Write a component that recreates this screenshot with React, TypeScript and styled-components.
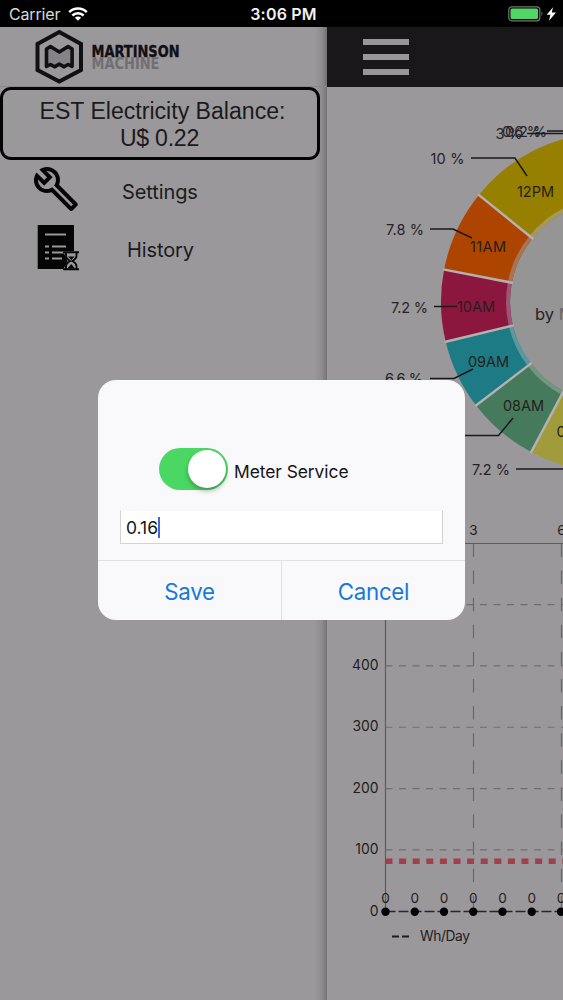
import React from "react";
import styled, { createGlobalStyle } from "styled-components";
import { MdOutlineBuild } from "react-icons/md";

const SURFACE = "#9a989b";

const GlobalStyle = createGlobalStyle`
  * { box-sizing: border-box; }
  body { margin: 0; background: ${SURFACE}; font-family: Inter, "Liberation Sans", sans-serif; color: #1b1a1d; }
`;

const Screen = styled.div`
  position: relative;
  display: flex;
  flex-direction: column;
  width: 563px;
  height: 1000px;
  overflow: hidden;
  background: ${SURFACE};
`;

const StatusBar = styled.header`
  display: grid;
  grid-template-columns: 1fr auto 1fr;
  align-items: center;
  flex: none;
  height: 27px;
  padding: 1px 5px 0 9px;
  background: #000;
  color: #d9d9da;
  font-size: 16px;
`;

const Carrier = styled.div`
  display: flex;
  align-items: center;
  gap: 8px;
  letter-spacing: -0.15px;
`;

const Clock = styled.div`
  color: #f2f2f2;
  font-weight: 600;
  font-size: 16px;
  letter-spacing: 0.2px;
`;

const Battery = styled.div`
  display: flex;
  justify-content: flex-end;
`;

const Body = styled.div`
  display: flex;
  flex: 1;
  min-height: 0;
`;

const Drawer = styled.nav`
  display: flex;
  flex-direction: column;
  flex: none;
  width: 327px;
  background: linear-gradient(to right, ${SURFACE} 315px, #8d8b8e 322px, #737174 327px);
`;

const Brand = styled.div`
  height: 60px;
  padding: 2px 0 0 35px;
  border-bottom: 1px solid #89878a;
`;

const Balance = styled.div`
  width: 320px;
  height: 73px;
  padding: 8px 0 0 5px;
  border: 3px solid #050506;
  border-radius: 11px;
  font: 23.1px/27px "Liberation Sans", sans-serif;
  text-align: center;
`;

const BalanceValue = styled.div`
  padding-right: 6px;
  letter-spacing: -0.25px;
`;

const MenuItem = styled.a<{ $inset: number; $gap: number; $lift: number }>`
  display: flex;
  align-items: center;
  gap: ${(p) => p.$gap}px;
  height: 58px;
  padding-left: ${(p) => p.$inset}px;
  font-size: 20px;
  letter-spacing: -0.1px;

  svg { margin-bottom: ${(p) => p.$lift}px; }
`;

const MenuList = styled.div`
  padding-top: 3px;
`;

const Page = styled.main`
  display: flex;
  flex-direction: column;
  flex: 1;
  min-width: 0;
`;

const TopBar = styled.div`
  display: flex;
  flex: none;
  height: 60px;
  padding: 12px 0 0 36px;
  background: #19171a;
`;

const MenuButton = styled.div`
  display: flex;
  flex-direction: column;
  gap: 9px;
`;

const MenuLine = styled.span`
  width: 46px;
  height: 6px;
  background: #98969a;
`;

const Chart = styled.svg`
  display: block;
  flex: none;
  overflow: hidden;
  font-family: Inter, "Liberation Sans", sans-serif;
`;

const Dialog = styled.section`
  position: absolute;
  left: 98px;
  top: 380px;
  display: flex;
  flex-direction: column;
  width: 367px;
  height: 240px;
  border-radius: 18px;
  background: #f9f8fb;
  overflow: hidden;
`;

const DialogBody = styled.div`
  display: flex;
  flex-direction: column;
  flex: 1;
  padding: 68px 21px 0 22px;
`;

const ToggleRow = styled.label`
  display: flex;
  align-items: center;
  gap: 6px;
  padding-left: 39px;
  font-size: 17.4px;
  letter-spacing: -0.05px;
  color: #151517;
`;

const ToggleText = styled.span`
  padding-top: 5px;
`;

const Toggle = styled.span`
  display: flex;
  justify-content: flex-end;
  width: 69px;
  height: 42px;
  padding: 2px;
  border-radius: 21px;
  background: #4bd763;
`;

const Knob = styled.span`
  width: 38px;
  height: 38px;
  border-radius: 50%;
  background: #fff;
  box-shadow: 0 3px 5px rgba(0, 0, 0, 0.28);
`;

const Field = styled.div`
  display: flex;
  align-items: center;
  width: 323px;
  height: 34px;
  margin-top: 20px;
  padding-left: 5px;
  border: 1px solid #d3d2d5;
  border-top-color: #f7f7f8;
  background: #fff;
  font-size: 17.5px;
  color: #151517;
`;

const Caret = styled.span`
  width: 2px;
  height: 21px;
  background: #4367d8;
`;

const Actions = styled.div`
  display: flex;
  flex: none;
  height: 60px;
  border-top: 1px solid #e2e1e4;
`;

const Action = styled.button`
  flex: 1;
  padding: 1px 0 0;
  border: 0;
  background: none;
  color: #1779dc;
  font: 22.3px Inter, sans-serif;
  letter-spacing: -0.3px;

  & + & { border-left: 1px solid #e2e1e4; }
`;

const Wifi = () => (
  <svg width="20" height="14" viewBox="0 0 20 14" fill="none" stroke="#fff" strokeWidth="2.5">
    <path d="M1.2 5.2a12.4 12.4 0 0 1 17.6 0" />
    <path d="M4.4 8.5a7.9 7.9 0 0 1 11.2 0" />
    <path d="M10 13.8 6.9 10.7a4.4 4.4 0 0 1 6.2 0Z" fill="#fff" stroke="none" />
  </svg>
);

const BatteryIcon = () => (
  <svg width="50" height="16" viewBox="0 0 50 16">
    <rect x=".8" y=".8" width="31" height="14" rx="3" fill="none" stroke="#777" strokeWidth="1.2" />
    <rect x="2.5" y="2.5" width="27.5" height="10.5" rx="1.5" fill="#4fd765" />
    <path d="M33.5 5.2q2 2.5 0 5" fill="#777" />
    <path d="M45 1.2 38.7 8.7h3.7L41 14.8l7-8.200h-4.200Z" fill="#fff" />
  </svg>
);

const Logo = () => (
  <svg width="150" height="56" viewBox="0 0 150 56">
    <path d="M24.300 3 46 15v26L24.300 52.500 2.500 41V15Z" fill="none" stroke="#111013" strokeWidth="4" />
    <path
      d="M11.500 37.500V20l4-2.500 8.800 5.500 8.800-5.500 4 2.500v17.500l-4-2-4 2.300-4.800-2.600-4.800 2.600-4-2.300Z"
      fill="#858387" stroke="#111013" strokeWidth="3.600" strokeLinejoin="round"
    />
    <g fontFamily="DejaVu Sans" fontWeight="700" fontSize="15.500">
      <text x="56.500" y="27.500" textLength="88" lengthAdjust="spacingAndGlyphs" fill="#111013" stroke="#111013" strokeWidth=".4">MARTINSON</text>
      <text x="56.500" y="40" textLength="68" lengthAdjust="spacingAndGlyphs" fill="#716f73">MACHINE</text>
    </g>
  </svg>
);

const HistoryIcon = () => (
  <svg width="46" height="46" viewBox="0 0 46 46">
    <rect x="4.700" y="0" width="36.300" height="44" fill="#050506" />
    <path d="M12 9.500h21M12 21.500h4M19 21.500h14M12 27.500h4M19 27.500h12M12 33.500h4M19 33.500h10" stroke={SURFACE} strokeWidth="1.900" />
    <path d="M30 26h16v19H30l4.500-9Z" fill={SURFACE} />
    <path d="M30 27.300h16M30 44.300h16" stroke="#050506" strokeWidth="2" />
    <path d="M33 28v3q0 2.500 4 5-4 2.500-4 5V44M43.500 28v3q0 2.500-4 5 4 2.500 4 5V44" fill="none" stroke="#050506" strokeWidth="1.800" />
    <path d="M35 31.500h6.500l-3.250 3.500ZM34.500 43.500l3.750-4.500 3.750 4.500Z" fill="#050506" />
  </svg>
);

const CX = 284;
const CY = 215;

const point = (r: number, deg: number) => {
  const a = (deg * Math.PI) / 180;
  return `${CX - r * Math.cos(a)} ${CY - r * Math.sin(a)}`;
};

const ring = (r0: number, r1: number, from: number, to: number) =>
  `M${point(r1, from)}A${r1} ${r1} 0 0 0 ${point(r1, to)}L${point(r0, to)}A${r0} ${r0} 0 0 1 ${point(r0, from)}Z`;

const slices = [
  { from: 75, to: 39, color: "#978000", rim: "#a6975c" },
  { from: 39, to: 11, color: "#ad4500", rim: "#aa7354" },
  { from: 11, to: -13.5, color: "#8c173e", rim: "#9a5672" },
  { from: -13.5, to: -37.5, color: "#1c7b84", rim: "#5c979c" },
  { from: -37.5, to: -62, color: "#457a5c", rim: "#769482" },
  { from: -62, to: -87, color: "#a19b3b", rim: "#a6a36c" },
];

const sliceLabels = [
  { x: 190, y: 110, text: "12PM", w: 37 },
  { x: 143, y: 165, text: "11AM", w: 36 },
  { x: 130, y: 225, text: "10AM", w: 38 },
  { x: 141, y: 280, text: "09AM", w: 41 },
  { x: 176, y: 323.5, text: "08AM", w: 41 },
];

const callouts = [
  { x: 103.5, y: 76.5, text: "10 %", w: 34, line: "M144 71H188L200 89" },
  { x: 59, y: 147.5, text: "7.8 %", w: 38, line: "M103 142H126L145 151" },
  { x: 64, y: 225.5, text: "7.2 %", w: 37, line: "M107 219.5H130" },
  { x: 58, y: 297, text: "6.6 %", w: 38, line: "M103 291.5H127L146 282" },
  { x: 145, y: 387.5, text: "7.2 %", w: 38, line: "M189 382H236" },
];

const Donut = () => (
  <Chart width="236" height="413" viewBox="0 0 236 413" fill="#252327" fontSize="14.5">
    <circle cx={CX} cy={CY} r="104" fill="#959596" />
    {slices.map((s) => (
      <g key={s.from}>
        <path d={ring(101, 170, s.from, s.to)} fill={s.color} />
        <path d={ring(101, 105, s.from, s.to)} fill={s.rim} />
      </g>
    ))}
    {slices.map((s) => (
      <path key={s.to} d={`M${point(100, s.to)}L${point(171, s.to)}`} stroke="#b5b1b0" strokeWidth="2.5" />
    ))}
    <g fill="#251f1b">
      {sliceLabels.map((l) => (
        <text key={l.text} x={l.x} y={l.y} textLength={l.w}>{l.text}</text>
      ))}
      <text x="229.5" y="350">07AM</text>
    </g>
    {callouts.map((c) => (
      <g key={c.y}>
        <text x={c.x} y={c.y} textLength={c.w}>{c.text}</text>
        <path d={c.line} fill="none" stroke="#1b191d" strokeWidth="1.5" />
      </g>
    ))}
    <path d="M138 348.5H171.5L186 331" fill="none" stroke="#1b191d" strokeWidth="1.5" />
    <text x="168.5" y="51.500" textLength="27">3 %</text>
    <text x="175" y="49.500" textLength="39">0.6 %</text>
    <text x="178" y="49.500" textLength="42">0.2 %</text>
    <path d="M200 46.500h20M220 44h16M220 46.500h16" stroke="#1b191d" strokeWidth="1.300" />
    <text x="208" y="232.500" fontSize="16.500">by <tspan fill="#66656a">M</tspan></text>
  </Chart>
);

const Usage = () => {
  const days = [0, 1, 2, 3, 4, 5, 6];
  const rows = [0, 100, 200, 300, 400, 500];
  return (
    <Chart width="236" height="500" viewBox="0 0 236 500" fill="#1f1d21" fontSize="13.900">
      <path d="M58.500 43.500H236M58.500 43.500V411" fill="none" stroke="#5c5a5d" strokeWidth="1.200" />
      {rows.slice(1).map((v) => (
        <path key={v} d={`M58.500 ${411.300 - v * 0.6135}H236`} stroke="#706e71" strokeWidth="1.200" strokeDasharray="7 6.500" />
      ))}
      <path d="M146.500 43.500V411M234.500 43.500V411" stroke="#69676a" strokeWidth="1.200" strokeDasharray="13.500 13.600" />
      <path d="M58.500 361.200H236" stroke="#a13f4a" strokeWidth="5.500" strokeDasharray="7 6.600" />
      <path d="M58.500 411.500H236" stroke="#29272b" strokeWidth="1.300" strokeDasharray="10 3" />
      {rows.map((v) => (
        <text key={v} x="51.500" y={415.500 - v * 0.6135} textAnchor="end">{v}</text>
      ))}
      {days.map((d) => (
        <g key={d}>
          <circle cx={58.500 + d * 29.250} cy="411.800" r="4.200" fill="#020204" />
          <text x={58.500 + d * 29.250} y="402.500" textAnchor="middle" fontSize="13.500">0</text>
        </g>
      ))}
      <text x="146.500" y="35" textAnchor="middle" fontSize="13.500">3</text>
      <text x="234.500" y="35" textAnchor="middle" fontSize="13.500">6</text>
      <path d="M65 436.500h7M75 436.500h7" stroke="#1f1d21" strokeWidth="1.800" />
      <text x="93" y="441.300" fontSize="13.800" textLength="50">Wh/Day</text>
    </Chart>
  );
};

export default function App() {
  return (
    <>
      <GlobalStyle />
      <Screen>
        <StatusBar>
          <Carrier>Carrier <Wifi /></Carrier>
          <Clock>3:06 PM</Clock>
          <Battery><BatteryIcon /></Battery>
        </StatusBar>
        <Body>
          <Drawer>
            <Brand><Logo /></Brand>
            <Balance>EST Electricity Balance:<BalanceValue>U$ 0.22</BalanceValue></Balance>
            <MenuList>
              <MenuItem $inset={32} $gap={42} $lift={7}><MdOutlineBuild size={48} color="#050506" />Settings</MenuItem>
              <MenuItem $inset={33} $gap={48} $lift={4}><HistoryIcon />History</MenuItem>
            </MenuList>
          </Drawer>
          <Page>
            <TopBar>
              <MenuButton><MenuLine /><MenuLine /><MenuLine /></MenuButton>
            </TopBar>
            <Donut />
            <Usage />
          </Page>
        </Body>
        <Dialog>
          <DialogBody>
            <ToggleRow><Toggle><Knob /></Toggle><ToggleText>Meter Service</ToggleText></ToggleRow>
            <Field>0.16<Caret /></Field>
          </DialogBody>
          <Actions><Action>Save</Action><Action>Cancel</Action></Actions>
        </Dialog>
      </Screen>
    </>
  );
}
